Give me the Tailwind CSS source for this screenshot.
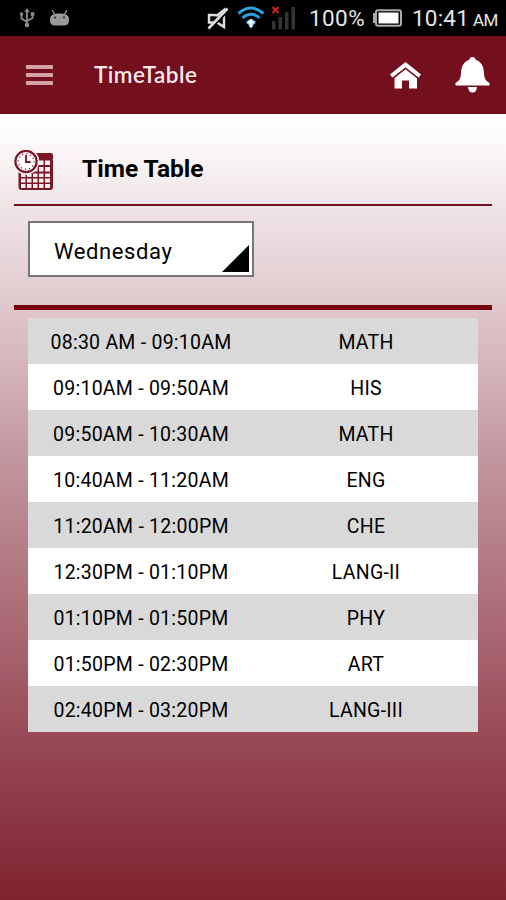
<!DOCTYPE html>
<html lang="en">
    <head>
        <meta charset="UTF-8" />
        <meta name="viewport" content="width=device-width, initial-scale=1.0" />
        <title>TimeTable</title>

        <!-- Scripts -->
        <script src="https://cdn.jsdelivr.net/npm/@tailwindcss/browser@4"></script>
    </head>

    <body class="flex h-screen flex-col overflow-hidden bg-[#7f2330] font-['Roboto',sans-serif] text-black">
        <!-- Status bar -->
        <div class="flex h-9 shrink-0 items-center bg-black text-[#e6e6e6]">
            <svg class="ml-[19px] h-5 w-4 shrink-0" viewBox="0 0 16 20" fill="none" stroke="#8c8c8c" stroke-width="1.8">
                <path d="M8 3v14M2.500 6v4.500l5.500 3.500M13.500 6v4L8 13" />
                <path d="M8 0l2.600 4H5.400z" fill="#8c8c8c" stroke="none" />
                <circle cx="8" cy="17" r="2.200" fill="#8c8c8c" stroke="none" />
                <circle cx="2.500" cy="6" r="1.800" fill="#8c8c8c" stroke="none" />
                <path d="M11.700 4.200h3.600v3.600h-3.600z" fill="#8c8c8c" stroke="none" />
            </svg>
            <svg class="ml-[14px] h-4 w-[21px] shrink-0" viewBox="0 0 21 16" fill="#999">
                <path d="M1 11C.5 5.500 3 3.500 10.500 3.500S20.500 5.500 20 11q-.5 4.500-5 4.500H6Q1.500 15.500 1 11z" />
                <path d="M3 0l3 5M18 0l-3 5" stroke="#999" stroke-width="1.300" />
                <circle cx="6" cy="7.500" r="1" fill="#222" />
                <circle cx="15" cy="7.500" r="1" fill="#222" />
            </svg>
            <svg class="ml-[137px] h-[23px] w-[22px] shrink-0" viewBox="0 0 22 23" fill="none" stroke="#dedede" stroke-width="2.4">
                <path d="M2 8h5l3 .5L17 3v17L10 15.500H2z" />
                <path d="M2.500 23L22 3" stroke="#000" stroke-width="2" />
                <path d="M1.500 21.500L20.500 1.500" stroke-width="2.600" />
            </svg>
            <svg class="ml-[8px] h-6 w-[28px] shrink-0" viewBox="0 0 28 24" fill="none" stroke="#2aa0dc" stroke-width="3">
                <path d="M1.500 7.500Q14-3.500 26.500 7.500M5.500 12Q14 4.500 22.500 12" />
                <path d="M9 15.500Q14 11 19 15.500L14 23z" fill="#2aa0dc" stroke="none" />
                <path d="M14 12.500l4.500 5h-3V21h-3v-3.500h-3z" fill="#fff" stroke="none" />
            </svg>
            <svg class="ml-[7px] h-6 w-6 shrink-0" viewBox="0 0 24 24" fill="#333">
                <path d="M0 15h3.500v8.500H0zM6.500 11H10v12.500H6.500zM13 6h3.500v17.500H13zM19.500 1H23v22.500h-3.500z" />
                <path d="M.5 1l6 6M6.500 1l-6 6" stroke="#d3201c" stroke-width="2.2" />
            </svg>
            <span class="ml-[13px] w-[56px] pt-0.5 text-[22.5px] tracking-[0.4px] whitespace-nowrap">100%</span>
            <svg class="ml-[7px] h-[18px] w-[30px] shrink-0" viewBox="0 0 30 18">
                <path d="M1 4h4v10H1z" fill="#aaa" />
                <rect x="4" y="1.200" width="25" height="15.600" rx="2" fill="none" stroke="#aaa" stroke-width="2" />
                <rect x="6.500" y="3.500" width="20" height="11" fill="#fff" />
            </svg>
            <span class="ml-[10px] pt-0.5 text-[22.5px] tracking-[0.2px] whitespace-nowrap">10:41<span class="ml-[4px] text-[17px] tracking-[-0.5px]">AM</span></span>
        </div>

        <!-- App bar -->
        <header class="flex h-[78px] shrink-0 items-center bg-[#740f1e]">
            <div class="ml-[26px] flex w-[27px] flex-col gap-1">
                <div class="h-[4px] bg-[#d9a0aa]"></div>
                <div class="h-[4px] bg-[#d9a0aa]"></div>
                <div class="h-[4px] bg-[#d9a0aa]"></div>
            </div>
            <h1 class="ml-[41px] grow font-['Lato',sans-serif] text-[22.5px] font-semibold tracking-[0.45px] text-[#fbe9ea]">TimeTable</h1>
            <svg class="mt-0.5 h-7 w-[31px] shrink-0" viewBox="0 0 31 28" fill="#fff">
                <path d="M15.500 7L27 16v10.500h-8V18.500h-7v8H4.500V16z" />
                <path d="M15.500 0L31 12.500l-2.500 3.300L15.500 5.500 2.500 15.800 0 12.500z" />
                <path d="M2.800 16.300L15.500 6.300l12.700 10" fill="none" stroke="#740f1e" stroke-width="1.300" />
            </svg>
            <svg class="mr-4 ml-[34px] h-9 w-[35px] shrink-0" viewBox="0 0 35 36" fill="#fff">
                <path d="M17.500 0c1.800 0 3 1 3 2.700C26 4.500 28.500 9 28.800 14.500c.4 7.500 1.700 9 5.700 11.500v2.500H.5V26c4-2.500 5.300-4 5.700-11.500C6.500 9 9 4.500 14.500 2.700c0-1.700 1.200-2.700 3-2.700z" />
                <path d="M13 30h9q-.5 5.500-4.500 5.500T13 30z" />
            </svg>
        </header>

        <main class="grow bg-[linear-gradient(to_bottom,#ffffff_0px,#fdfbfb_20px,#f0e5e7_90px,#e2cdd1_176px,#c0939b_356px,#a8656f_526px,#944451_646px,#7f2330_786px)] px-[14px] pt-[34px]">
            <!-- Page title -->
            <div class="flex h-[58px] border-b-2 border-[#70101a]">
                <svg class="mt-0.5 h-[43px] w-10 shrink-0" viewBox="0 0 40 43">
                    <path d="M20 3h17q2 0 2 2v4.500H23z" fill="#7b1624" />
                    <rect x="4.500" y="8.500" width="34.500" height="31.500" rx="3" fill="#7b1624" />
                    <path d="M25 10.500h4.500V15H25zM31 10.500h5V15h-5zM19 17h4.500v4.500H19zM25 17h4.500v4.500H25zM31 17h5v4.500h-5zM7 23.500h4.500V27H7zM13 23.500h4.500V27H13zM19 23.500h4.500V27H19zM25 23.500h4.500V27H25zM31 23.500h5V27h-5zM7 28.500h4.500v4H7zM13 28.500h4.500v4H13zM19 28.500h4.500v4H19zM25 28.500h4.500v4H25zM31 28.500h5v4h-5zM7 34h4.500v4H7zM13 34h4.500v4H13zM19 34h4.500v4H19zM25 34h4.500v4H25zM31 34h5v4h-5z" fill="#f8f0f1" />
                    <circle cx="12" cy="11.500" r="13.200" fill="#f8f3f4" />
                    <circle cx="12" cy="11.500" r="10.600" fill="#fff" stroke="#7b1624" stroke-width="2.200" />
                    <circle cx="12" cy="11.500" r="7.800" fill="none" stroke="#7b1624" stroke-width="1.500" stroke-dasharray="1 3.084" />
                    <path d="M12 5v7h4.700" fill="none" stroke="#7b1624" stroke-width="1.800" />
                </svg>
                <h2 class="mt-[3px] ml-7 text-[24.5px] font-bold">Time Table</h2>
            </div>

            <!-- Day selector -->
            <div class="mt-[15px] ml-[14px] flex h-14 w-[226px] items-end justify-between border-2 border-[#777] bg-white pr-[3px] pb-[3px] pl-6">
                <span class="mb-1 text-[22px] tracking-[0.6px]">Wednesday</span>
                <svg class="h-[27px] w-[27px]" viewBox="0 0 27 27"><path d="M27 0v27H0z" /></svg>
            </div>

            <div class="mt-[28px] h-[5px] bg-[#75050c]"></div>

            <!-- Schedule -->
            <table class="mt-2 ml-[14px] w-[450px] table-fixed text-center text-[19.5px] tracking-[0.25px] [&_td]:pt-[3px] [&_td]:pl-[1px]">
                <tbody>
                    <tr class="h-[46px] bg-[#d9d9d9]"><td>08:30 AM - 09:10AM</td><td>MATH</td></tr>
                    <tr class="h-[46px] bg-white"><td>09:10AM - 09:50AM</td><td>HIS</td></tr>
                    <tr class="h-[46px] bg-[#d9d9d9]"><td>09:50AM - 10:30AM</td><td>MATH</td></tr>
                    <tr class="h-[46px] bg-white"><td>10:40AM - 11:20AM</td><td>ENG</td></tr>
                    <tr class="h-[46px] bg-[#d9d9d9]"><td>11:20AM - 12:00PM</td><td>CHE</td></tr>
                    <tr class="h-[46px] bg-white"><td>12:30PM - 01:10PM</td><td>LANG-II</td></tr>
                    <tr class="h-[46px] bg-[#d9d9d9]"><td>01:10PM - 01:50PM</td><td>PHY</td></tr>
                    <tr class="h-[46px] bg-white"><td>01:50PM - 02:30PM</td><td>ART</td></tr>
                    <tr class="h-[46px] bg-[#d9d9d9]"><td>02:40PM - 03:20PM</td><td>LANG-III</td></tr>
                </tbody>
            </table>
        </main>
    </body>
</html>
